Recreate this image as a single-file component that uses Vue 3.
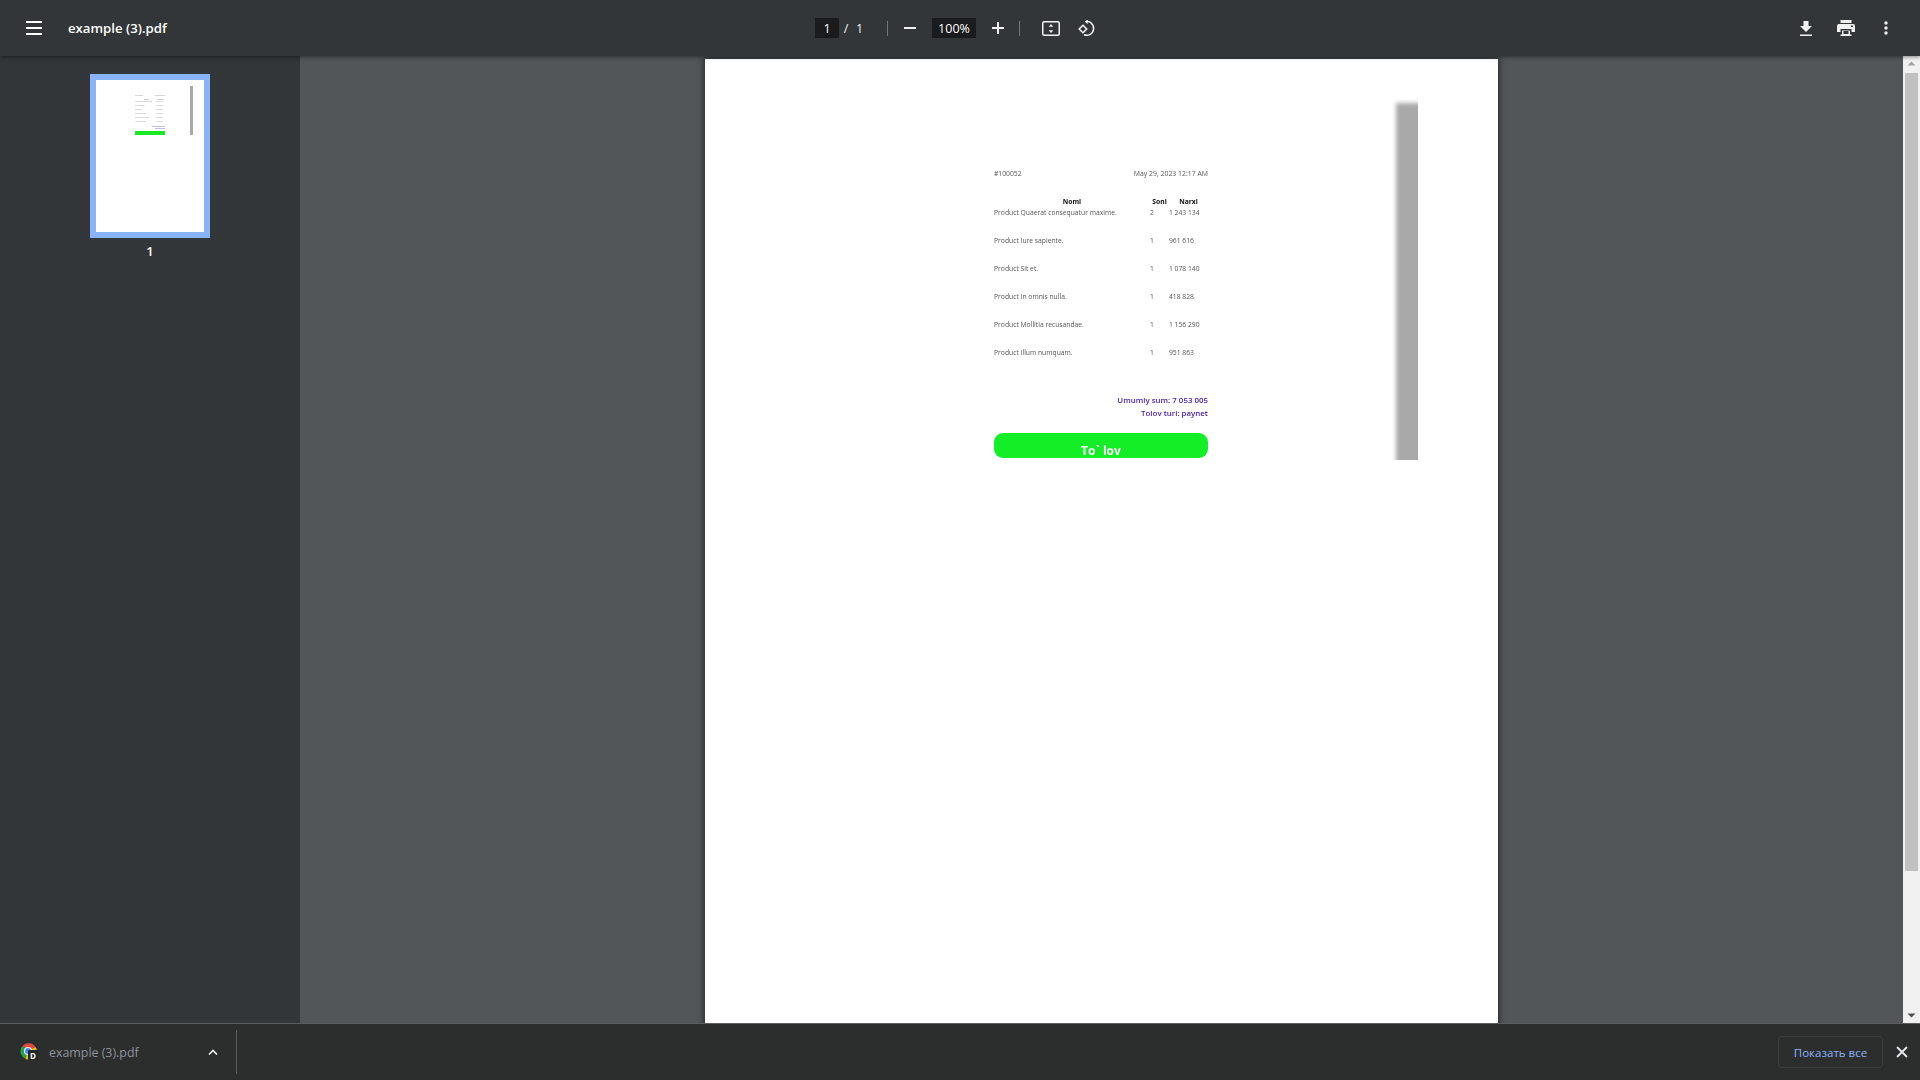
<template>
  <div class="viewer">
    <header class="toolbar">
      <div class="tb-left">
        <svg class="menu" width="16" height="14" viewBox="0 0 16 14"><path d="M0 0h16v2H0zM0 6h16v2H0zM0 12h16v2H0z" fill="#fff"/></svg>
        <span class="title">example (3).pdf</span>
      </div>
      <div class="tb-center">
        <span class="field page-field">1</span>
        <span class="slash">/</span>
        <span class="total">1</span>
        <span class="sep"></span>
        <svg width="12" height="2" viewBox="0 0 12 2" class="minus"><path d="M0 0h12v2H0z" fill="#f1f1f1"/></svg>
        <span class="field zoom-field">100%</span>
        <svg width="12" height="12" viewBox="0 0 12 12" class="plus"><path d="M5 0h2v5h5v2H7v5H5V7H0V5h5z" fill="#f1f1f1"/></svg>
        <span class="sep sep2"></span>
        <svg width="18" height="15" viewBox="0 0 18 15" class="fit">
          <rect x=".75" y=".75" width="16.5" height="13.5" rx="1.5" fill="none" stroke="#f1f1f1" stroke-width="1.5"/>
          <path d="M9 3l2.300 2.700H6.700zM9 12l2.300-2.700H6.700z" fill="#f1f1f1"/>
        </svg>
        <svg width="18" height="18" viewBox="0 0 18 18" class="rotate">
          <path d="M8.500 2.400a7 7 0 1 1-1.500 13.400" fill="none" stroke="#f1f1f1" stroke-width="1.500"/>
          <path d="M11 1l-3.400 1.500L10.500 5z" fill="#f1f1f1"/>
          <path d="M6 6.200L9.700 10 6 13.700 2.200 10z" fill="none" stroke="#f1f1f1" stroke-width="1.500"/>
        </svg>
      </div>
      <div class="tb-right">
        <svg width="12" height="15" viewBox="0 0 12 15"><path d="M3.500 0h5v5H12L6 11 0 5h3.500zM0 13.500h12V15H0z" fill="#f1f1f1"/></svg>
        <svg width="18" height="16" viewBox="0 0 18 16" class="print">
          <path d="M3.500 0h11v3h-11zM2 4h14a2 2 0 0 1 2 2v6h-3.500V9h-11v3H0V6a2 2 0 0 1 2-2zM5 10.500h8V14.500h1.500V16h-11v-1.500H5z" fill="#f1f1f1"/>
          <rect x="6.500" y="11" width="5" height="3" fill="#323639"/>
          <rect x="14" y="5.500" width="2" height="1.500" fill="#323639"/>
        </svg>
        <svg width="4" height="14" viewBox="0 0 4 14" class="dots"><circle cx="2" cy="2" r="1.700" fill="#f1f1f1"/><circle cx="2" cy="7" r="1.700" fill="#f1f1f1"/><circle cx="2" cy="12" r="1.700" fill="#f1f1f1"/></svg>
      </div>
    </header>

    <div class="body">
      <aside class="side">
        <div class="thumb">
          <svg width="108" height="152" viewBox="0 0 108 152">
            <rect x="39" y="15" width="8" height=".6" fill="#bbb"/>
            <rect x="59" y="15" width="10" height=".6" fill="#bbb"/>
            <rect x="48" y="19" width="5" height=".6" fill="#aaa"/>
            <rect x="61" y="19" width="7" height=".6" fill="#aaa"/>
            <template v-for="(w, i) in thumbRows" :key="i">
              <rect x="39" :y="21 + i * 4" :width="w" height=".6" fill="#c4c4c4"/>
              <rect x="60" :y="21 + i * 4" width="7" height=".6" fill="#c4c4c4"/>
            </template>
            <rect x="56" y="46" width="13" height=".7" fill="#a79bdc"/>
            <rect x="59" y="48" width="10" height=".7" fill="#a79bdc"/>
            <rect x="39" y="51" width="30" height="4" fill="#19ea26"/>
            <rect x="94" y="6" width="3" height="49" fill="#a9a9a9"/>
          </svg>
        </div>
        <span class="thumb-num">1</span>
      </aside>

      <main class="stage">
        <div class="pages">
          <div class="page">
            <div class="doc">
              <div class="doc-head">
                <span>#100052</span>
                <span class="date">May 29, 2023 12:17 AM</span>
              </div>
              <div class="items">
                <b class="c-name">Nomi</b>
                <b class="c-mid">Soni</b>
                <b class="c-mid">Narxi</b>
                <template v-for="item in items" :key="item.name">
                  <span class="cell">{{ item.name }}</span>
                  <span class="cell c-qty">{{ item.qty }}</span>
                  <span class="cell">{{ item.price }}</span>
                </template>
              </div>
              <div class="totals">
                <div>Umumiy sum: 7 053 005</div>
                <div>Tolov turi: paynet</div>
              </div>
              <div class="pay">To` lov</div>
            </div>
            <div class="ghost"><div class="ghost-bar"></div></div>
          </div>
        </div>
        <div class="scrollbar">
          <svg width="17" height="17" viewBox="0 0 17 17"><path d="M8.500 5.500l4 4h-8z" fill="#a3a3a3"/></svg>
          <div class="thumb-bar"></div>
          <svg width="17" height="17" viewBox="0 0 17 17"><path d="M8.500 11.500l-4-4h8z" fill="#505050"/></svg>
        </div>
      </main>
    </div>

    <footer class="downloads">
      <div class="file">
        <svg width="18" height="18" viewBox="0 0 18 18" class="chrome">
          <path d="M8 8L2.600 3A8 8 0 0 1 15.500 4L8 8z" fill="#dd4b3e"/>
          <path d="M8 8L2.600 3A8 8 0 0 0 5.500 15.800z" fill="#27a34a"/>
          <path d="M8 8l7.500-4a8 8 0 0 1-10 11.800z" fill="#f4c20d"/>
          <circle cx="8" cy="8" r="4" fill="#fff"/>
          <circle cx="8" cy="8" r="3" fill="#4285f4"/>
          <rect x="8" y="7" width="10" height="10" rx="1" fill="#25262a"/>
          <text x="13" y="15.500" font-size="8" font-weight="700" text-anchor="middle" fill="#fff" font-family="Open Sans, sans-serif">D</text>
        </svg>
        <span class="file-name">example (3).pdf</span>
        <svg width="10" height="6" viewBox="0 0 10 6" class="chev"><path d="M1 5.500L5 1.500l4 4" fill="none" stroke="#e8eaed" stroke-width="1.700"/></svg>
      </div>
      <span class="dl-sep"></span>
      <div class="dl-right">
        <span class="show-all">Показать все</span>
        <svg width="12" height="12" viewBox="0 0 12 12"><path d="M1 1l10 10M11 1L1 11" stroke="#e8eaed" stroke-width="1.800" fill="none"/></svg>
      </div>
    </footer>
  </div>
</template>

<script setup>
const items = [
  { name: 'Product Quaerat consequatur maxime.', qty: 2, price: '1 243 134' },
  { name: 'Product Iure sapiente.', qty: 1, price: '961 616' },
  { name: 'Product Sit et.', qty: 1, price: '1 078 140' },
  { name: 'Product In omnis nulla.', qty: 1, price: '418 828' },
  { name: 'Product Mollitia recusandae.', qty: 1, price: '1 156 290' },
  { name: 'Product Illum numquam.', qty: 1, price: '951 863' },
]

const thumbRows = [17, 10, 7, 11, 14, 11]
</script>

<style>
html, body {
  margin: 0;
  overflow: hidden;
}
</style>

<style scoped>
.viewer {
  width: 1920px;
  height: 1080px;
  display: flex;
  flex-direction: column;
  font-family: "Open Sans", "Noto Sans", sans-serif;
  background: #525659;
  overflow: hidden;
}

.toolbar {
  height: 56px;
  flex: none;
  background: #323639;
  color: #f1f1f1;
  display: flex;
  align-items: center;
  position: relative;
  z-index: 2;
  box-shadow: 0 1px 4px rgba(0, 0, 0, 0.45);
}

.tb-left {
  width: 800px;
  display: flex;
  align-items: center;
  padding-left: 26px;
  box-sizing: border-box;
}

.title {
  margin-left: 26px;
  font-size: 13.2px;
  font-weight: 600;
  color: #fff;
}

.tb-center {
  display: flex;
  align-items: center;
  padding-left: 15px;
  font-size: 12.5px;
}

.field {
  height: 20px;
  background: #191b1c;
  color: #fff;
  display: flex;
  align-items: center;
  justify-content: center;
}

.page-field { width: 24px; }

.slash { width: 14px; text-align: center; }

.total { margin-left: 3px; width: 8px; }

.sep {
  width: 1px;
  height: 15px;
  background: #74777a;
  margin-left: 23px;
}

.minus { margin-left: 16px; }

.zoom-field { width: 44px; margin-left: 16px; }

.plus { margin-left: 16px; }

.sep2 { margin-left: 15px; }

.fit { margin-left: 22px; }

.rotate { margin-left: 17px; }

.tb-right {
  margin-left: auto;
  display: flex;
  align-items: center;
  padding-right: 32px;
}

.print { margin-left: 25px; }

.dots { margin-left: 29px; }

.body {
  flex: 1;
  min-height: 0;
  display: flex;
}

.side {
  width: 300px;
  flex: none;
  background: #323639;
  display: flex;
  flex-direction: column;
  align-items: center;
  padding-top: 18px;
  box-sizing: border-box;
}

.thumb {
  width: 108px;
  height: 152px;
  border: 6px solid #8ab4f8;
  background: #fff;
  flex: none;
}

.thumb svg { display: block; }

.thumb-num {
  margin-top: 4px;
  font-size: 13px;
  line-height: 18px;
  font-weight: 600;
  color: #fff;
}

.stage {
  flex: 1;
  min-width: 0;
  display: flex;
}

.pages {
  flex: 1;
  display: flex;
  justify-content: center;
  padding-top: 3px;
  overflow: hidden;
}

.page {
  width: 793px;
  height: 1122px;
  flex: none;
  background: #fff;
  position: relative;
  box-shadow: 0 0 6px 1px rgba(0, 0, 0, 0.55);
}

.doc {
  width: 214px;
  margin-left: 289px;
  padding-top: 108.5px;
  font-size: 6.75px;
  line-height: 11px;
  color: #555;
  filter: blur(0.3px);
}

.doc-head {
  display: flex;
  justify-content: space-between;
  margin-bottom: 17px;
}

.date { font-size: 6.9px; }

.items {
  display: grid;
  grid-template-columns: 156px 19px 39px;
  grid-auto-rows: 28px;
  grid-template-rows: 11px;
}

.items b {
  color: #111;
  font-weight: 700;
  text-align: center;
}

.totals {
  margin-top: 19.5px;
  text-align: right;
  font-size: 7.9px;
  line-height: 13px;
  font-weight: 600;
  color: #4a22b0;
}

.pay {
  margin-top: 13px;
  height: 25px;
  box-sizing: border-box;
  padding-top: 11px;
  border-radius: 9px;
  background: #14ee26;
  color: #fff;
  font-size: 12px;
  font-weight: 700;
  line-height: 14px;
  text-align: center;
}

.ghost {
  position: absolute;
  left: 675px;
  top: 34px;
  width: 38px;
  height: 367px;
  overflow: hidden;
}

.ghost-bar {
  position: absolute;
  left: 16px;
  top: 10px;
  width: 40px;
  height: 420px;
  background: #a9a9a9;
  filter: blur(2px);
}

.scrollbar {
  width: 17px;
  flex: none;
  background: #f1f1f1;
  display: flex;
  flex-direction: column;
  position: relative;
}

.scrollbar svg { flex: none; display: block; }

.thumb-bar {
  height: 798px;
  background: #c1c1c1;
  margin: 0 2px auto;
}

.downloads {
  height: 57px;
  flex: none;
  box-sizing: border-box;
  border-top: 1px solid #5c5d5f;
  background: #2c2d2d;
  display: flex;
  align-items: center;
  position: relative;
  z-index: 3;
}

.file {
  width: 236px;
  display: flex;
  align-items: center;
  padding-left: 20px;
  box-sizing: border-box;
}

.file-name {
  margin-left: 11px;
  font-size: 12.4px;
  color: #8d949b;
}

.chev { margin-left: auto; margin-right: 18px; }

.dl-sep {
  width: 1px;
  height: 44px;
  background: #58595b;
}

.dl-right {
  margin-left: auto;
  display: flex;
  align-items: center;
  padding-right: 12px;
}

.show-all {
  width: 105px;
  height: 32px;
  box-sizing: border-box;
  border: 1px solid #3a3b3d;
  border-radius: 4px;
  display: flex;
  align-items: center;
  justify-content: center;
  font-size: 11.5px;
  font-weight: 500;
  color: #8ab4f8;
  margin-right: 13px;
}
</style>
